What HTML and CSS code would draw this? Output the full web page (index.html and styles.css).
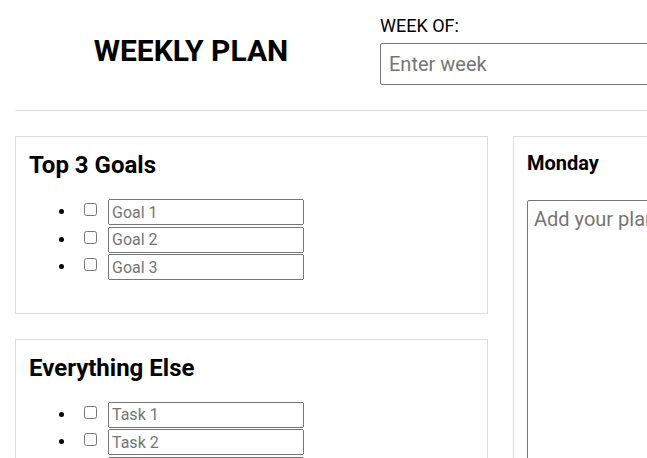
FILE: index.html
```html
<!DOCTYPE html>
<html lang="en">
<head>
<meta charset="utf-8">
<title>Weekly Plan</title>
<link rel="stylesheet" href="styles.css">
</head>
<body>
<div class="page">
  <header class="header">
    <h1 class="title">WEEKLY PLAN</h1>
    <div class="week">
      <label class="week-label" for="week">WEEK OF:</label>
      <input class="week-input" id="week" type="text" placeholder="Enter week">
    </div>
  </header>
  <main class="grid">
    <div class="col">
      <section class="card">
        <h2 class="card-title">Top 3 Goals</h2>
        <ul class="list">
          <li class="item"><input class="check" type="checkbox"><input class="field" type="text" placeholder="Goal 1"></li>
          <li class="item"><input class="check" type="checkbox"><input class="field" type="text" placeholder="Goal 2"></li>
          <li class="item"><input class="check" type="checkbox"><input class="field" type="text" placeholder="Goal 3"></li>
        </ul>
      </section>
      <section class="card">
        <h2 class="card-title">Everything Else</h2>
        <ul class="list">
          <li class="item"><input class="check" type="checkbox"><input class="field" type="text" placeholder="Task 1"></li>
          <li class="item"><input class="check" type="checkbox"><input class="field" type="text" placeholder="Task 2"></li>
          <li class="item"><input class="check" type="checkbox"><input class="field" type="text" placeholder="Task 3"></li>
          <li class="item"><input class="check" type="checkbox"><input class="field" type="text" placeholder="Task 4"></li>
        </ul>
      </section>
    </div>
    <div class="col">
      <section class="card">
        <h3 class="day-title">Monday</h3>
        <textarea class="plan" placeholder="Add your plan"></textarea>
      </section>
    </div>
  </main>
</div>
</body>
</html>
```
FILE: styles.css
```css
html, body {
  margin: 0;
  padding: 0;
  overflow: hidden;
  background: #fff;
}
body {
  font-family: Roboto, "Liberation Sans", sans-serif;
  font-size: 16px;
  color: #000;
}
.page {
  width: 972px;
  padding: 0 15px;
}
.header {
  display: flex;
  align-items: center;
  padding: 15px 0 25px;
  border-bottom: 1px solid #ddd;
}
.title {
  width: 352px;
  margin: 0 13px 0 0;
  text-align: center;
  font-size: 30px;
  font-weight: 700;
}
.week {
  display: flex;
  flex-direction: column;
}
.week-label {
  font-size: 18px;
  margin-bottom: 7px;
}
.week-input {
  width: 450px;
  font-family: inherit;
  font-size: 20px;
  padding: 8px;
  border: 1px solid #767676;
  border-radius: 2px;
}
.grid {
  display: grid;
  grid-template-columns: 473px 473px;
  gap: 25px;
  margin-top: 25px;
}
.col {
  display: flex;
  flex-direction: column;
  gap: 25px;
}
.card {
  border: 1px solid #ddd;
  padding: 14px 13px;
}
.card-title {
  margin: 0;
  font-size: 24px;
  font-weight: 700;
}
.list {
  margin: 20px 0 17px;
  padding-left: 47px;
}
.item {
  height: 27.5px;
  line-height: 26px;
}
.check {
  margin: 4px 11px 3px 8px;
  vertical-align: top;
}
.field {
  box-sizing: border-box;
  height: 26px;
  font-family: inherit;
  font-size: 16px;
  line-height: normal;
  padding: 1px 2px;
  width: 196px;
  vertical-align: top;
}
.day-title {
  margin: 0;
  font-size: 20px;
  font-weight: 700;
}
.plan {
  display: block;
  margin-top: 25px;
  width: 400px;
  height: 300px;
  font-family: inherit;
  font-size: 20px;
  padding: 6px;
  border: 1px solid #767676;
  border-radius: 2px;
  resize: none;
}
```
